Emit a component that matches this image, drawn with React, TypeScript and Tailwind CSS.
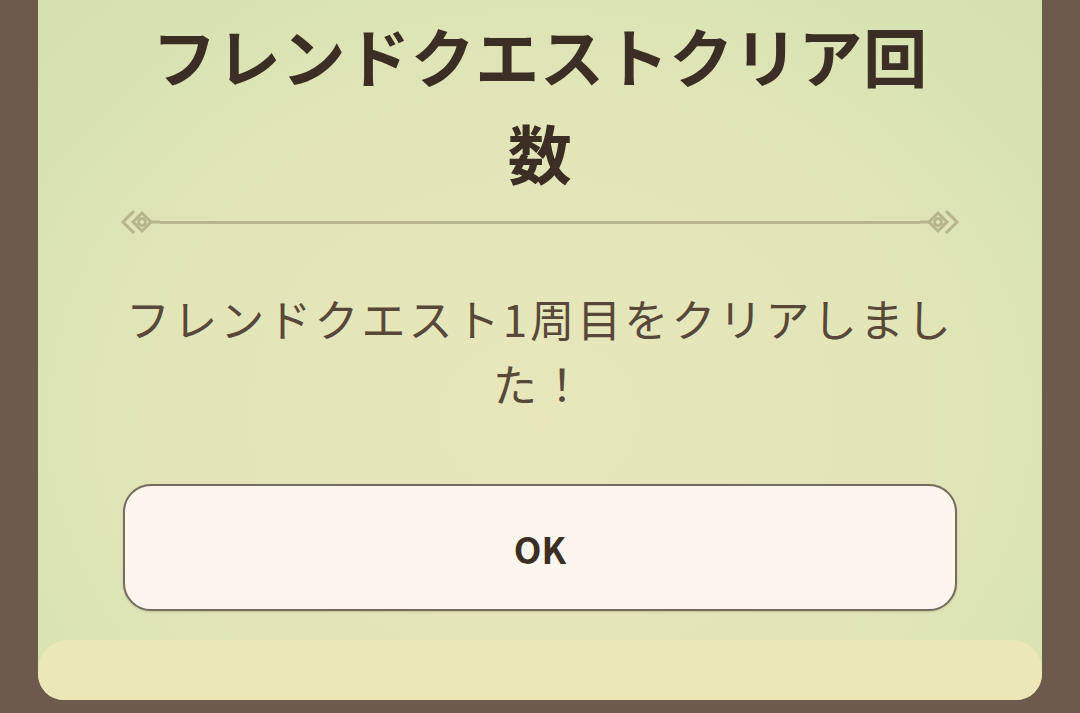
import React from 'react';

const Ornament = ({ flip = false }: { flip?: boolean }) => (
  <svg
    width="40"
    height="32"
    viewBox="0 0 40 32"
    className={flip ? 'shrink-0 -scale-x-100' : 'shrink-0'}
    fill="none"
    stroke="#b7b58c"
    strokeWidth="3"
  >
    <path d="M14 5 L3 16 L14 27" />
    <path d="M22 7 L13 16 L22 25 L31 16 Z" />
    <circle cx="22" cy="16" r="3.5" />
    <path d="M31 16 L40 16" />
  </svg>
);

const App = () => {
  return (
    <div
      className="h-[713px] w-full bg-[#6d5a4d] px-[38px] overflow-hidden"
      style={{ fontFamily: '"Noto Sans CJK JP", "Noto Sans", sans-serif' }}
    >
      <div className="relative h-[700px] overflow-hidden rounded-b-[26px] bg-[radial-gradient(ellipse_at_50%_60%,#e8e7bc_0%,#e1e5b7_55%,#d3e2af_100%)] flex flex-col">
        <div className="flex flex-col px-[82px] pt-[6px]">
          <h1 className="mx-auto w-[800px] text-center text-[64px] font-bold leading-[97px] tracking-[0.01em] text-[#3b2e25]">
            フレンドクエストクリア回数
          </h1>

          <div className="mt-[6px] flex items-center">
            <Ornament />
            <div className="h-[3px] flex-1 bg-[#bab890]" />
            <Ornament flip />
          </div>

          <p className="mt-[48px] text-center text-[44px] leading-[65px] tracking-[0.07em] text-[#574839]">
            フレンドクエスト1周目をクリアしました！
          </p>

          <button className="mx-[3px] mt-[68px] h-[127px] rounded-[28px] border-2 border-[#766b60] bg-[#fdf6ee] text-[36px] font-bold text-[#3b2e25] shadow-[0_1px_2px_rgba(0,0,0,0.15)]">
            OK
          </button>
        </div>

        <div className="mt-auto h-[60px] rounded-t-[30px] bg-[#ebe7b8]" />
      </div>
    </div>
  );
};

export default App;
